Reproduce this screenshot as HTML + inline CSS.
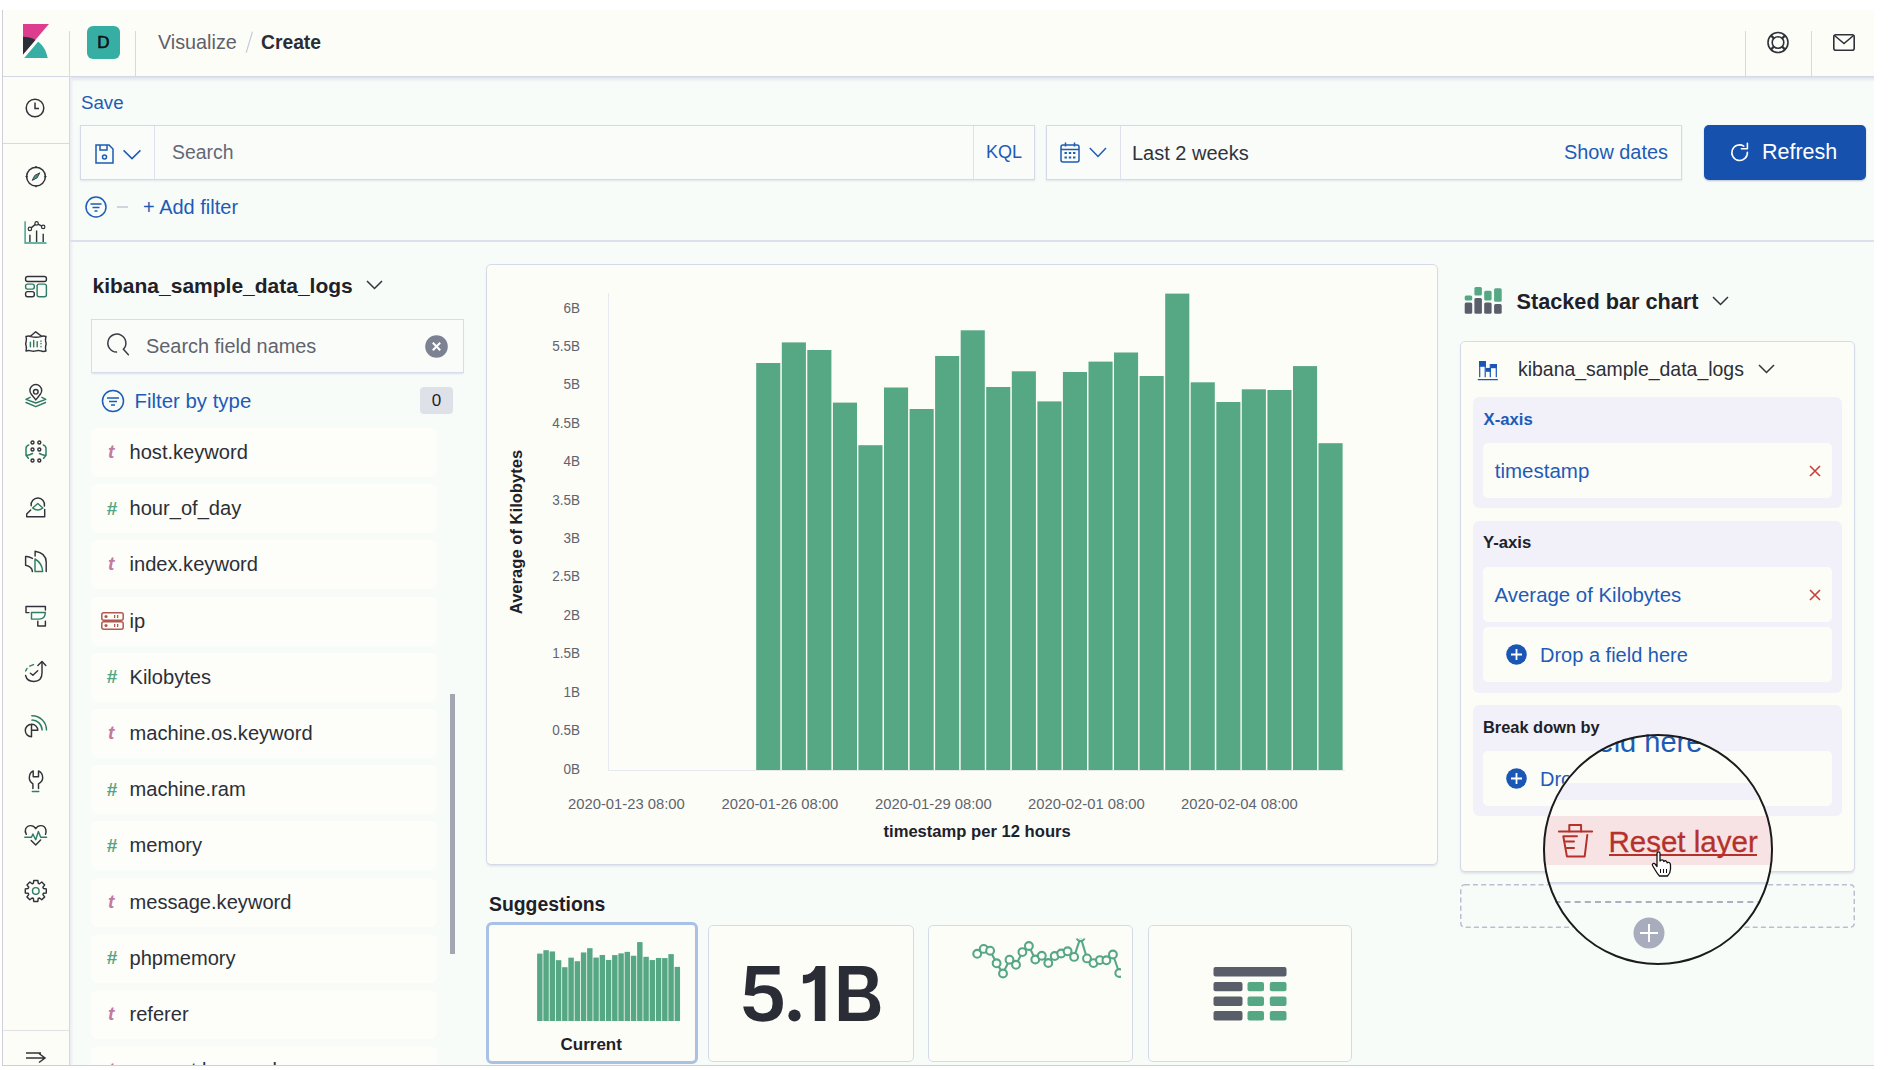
<!DOCTYPE html>
<html><head><meta charset="utf-8">
<style>
*{box-sizing:border-box;margin:0;padding:0}
html,body{width:1894px;height:1070px;overflow:hidden;background:#fff;font-family:"Liberation Sans",sans-serif;color:#30333b}
.a{position:absolute}
.t{position:absolute;white-space:nowrap;line-height:1}
#app{position:absolute;left:2px;top:10px;width:1872px;height:1056px;background:#f8fcf9;border-left:1px solid #cdd0da;border-bottom:1px solid #cdd0da;overflow:hidden}
.blue{color:#1d5bb6}
svg{position:absolute;overflow:visible}
.fi{left:91px;width:346px;height:49px;border-radius:6px;background:#fdfdf9}
.ft{left:108px;font-size:19px;font-weight:bold;font-style:italic;color:#c27aa0}
.fh{left:106.5px;font-size:19px;font-weight:bold;font-style:italic;color:#54a582}
.fn{left:129.5px;font-size:20.1px;color:#2c2f37}
.yl{left:480px;width:100px;text-align:right;font-size:14.7px;color:#5f636d;transform:scaleX(.92);transform-origin:100% 50%}
.xl{font-size:14.8px;color:#5f636d}
.sc{top:925px;height:137px;border:1px solid #d6dae8;border-radius:5px;background:#fdfdf8}
.grp{left:1473px;width:369px;border-radius:6px;background:#f2f1f9}
.itm{left:1483px;width:349px;height:55px;border-radius:5px;background:#fdfdf8}
.xx{position:absolute;left:1809px}
</style></head>
<body>
<div id="app"></div>
<div id="clip" style="position:absolute;left:0;top:0;width:1874px;height:1065px;overflow:hidden">
<!-- HEADER -->
<div class="a" style="left:3px;top:10px;width:1871px;height:66px;background:#fdfdf7"></div>
<div class="a" style="left:3px;top:76px;width:1871px;height:1px;background:#d4d7e6"></div>
<div class="a" style="left:70px;top:77px;width:1804px;height:5px;background:linear-gradient(#dfe1e8,rgba(244,244,250,0))"></div>
<!-- left nav -->
<div class="a" style="left:3px;top:77px;width:66px;height:988px;background:#fdfdf7"></div>
<div class="a" style="left:69px;top:31px;width:1px;height:1034px;background:#d5d8e8"></div>
<div class="a" style="left:70px;top:77px;width:4px;height:988px;background:linear-gradient(90deg,#ebebf3,rgba(248,252,249,0))"></div>
<div class="a" style="left:135px;top:31px;width:1px;height:45px;background:#d5d8e8"></div>
<div class="a" style="left:1745px;top:31px;width:1px;height:45px;background:#d5d8e8"></div>
<div class="a" style="left:1811px;top:31px;width:1px;height:45px;background:#d5d8e8"></div>
<div class="a" style="left:3px;top:143px;width:66px;height:1px;background:#d5d8e8"></div>
<div class="a" style="left:3px;top:1030px;width:66px;height:1px;background:#e3e0e6"></div>

<!-- logo -->
<svg style="left:23px;top:24px" width="26" height="34" viewBox="4 0 25 32" preserveAspectRatio="none">
<polygon fill="#de3c8e" points="4 0 4 28.789 28.935 .017"/>
<path fill="#2b2e36" d="M4,12 L4,28.789 L15.906,15.051 C12.453,13.107 8.389,12 4,12"/>
<path fill="#37afa5" d="M18.479,16.664 L6.268,30.754 L5.202,31.984 L27.722,31.984 C26.5,25.328 23.24,19.696 18.479,16.664"/>
</svg>
<!-- avatar -->
<div class="a" style="left:87px;top:26px;width:33px;height:33px;border-radius:6px;background:#37aea3"></div>
<div class="t" style="left:87px;top:34px;width:33px;text-align:center;font-size:17px;color:#111;-webkit-text-stroke:0.6px #111">D</div>
<div class="t" style="left:158px;top:33px;font-size:19.8px;color:#5d616b">Visualize</div>
<svg style="left:245px;top:31px" width="9" height="23" viewBox="0 0 9 23"><path d="M7.5 0.6L1.2 21.7" stroke="#c3c9dc" stroke-width="1.2"/></svg>
<div class="t" style="left:261px;top:33px;font-size:19.3px;font-weight:bold;color:#2a2d35">Create</div>
<!-- help -->
<svg style="left:1767px;top:31px" width="22" height="23" viewBox="0 0 22 23">
<g fill="none" stroke="#2f323a" stroke-width="1.6"><circle cx="11" cy="11.5" r="10"/><circle cx="11" cy="11.5" r="5.8"/>
<path d="M4 4.5L7 7.5M18 4.5L15 7.5M4 18.5L7 15.5M18 18.5L15 15.5" stroke-width="2.4"/></g></svg>
<svg style="left:1833px;top:34px" width="22" height="17" viewBox="0 0 22 17">
<g fill="none" stroke="#2f323a" stroke-width="1.6"><rect x="0.8" y="0.8" width="20.4" height="15.4" rx="2"/><path d="M1.5 1.5L11 9.5L20.5 1.5"/></g></svg>

<!-- QUERY BAR -->
<div class="t blue" style="left:81px;top:94px;font-size:18.7px">Save</div>
<div class="a" style="left:80px;top:125px;width:955px;height:55px;border:1px solid #d5d9e8;background:#fafcfa;box-shadow:0 1px 2px rgba(150,160,190,.25)"></div>
<div class="a" style="left:154px;top:126px;width:1px;height:53px;background:#dfe2ee"></div>
<div class="a" style="left:973px;top:126px;width:1px;height:53px;background:#dfe2ee"></div>
<div class="t" style="left:172px;top:143px;font-size:19.4px;color:#646873">Search</div>
<div class="t blue" style="left:986px;top:143px;font-size:18px">KQL</div>
<div class="a" style="left:1046px;top:125px;width:636px;height:55px;border:1px solid #d5d9e8;background:#fafcfa;box-shadow:0 1px 2px rgba(150,160,190,.25)"></div>
<div class="a" style="left:1120px;top:126px;width:1px;height:53px;background:#dfe2ee"></div>
<div class="t" style="left:1132px;top:143px;font-size:20px;color:#30333b">Last 2 weeks</div>
<div class="t blue" style="left:1564px;top:143px;font-size:19.9px">Show dates</div>
<div class="a" style="left:1704px;top:125px;width:162px;height:55px;border-radius:5px;background:#1651ae;box-shadow:0 1px 2px rgba(40,60,120,.3)"></div>
<div class="t" style="left:1762px;top:142px;font-size:21.5px;color:#fff">Refresh</div>
<div class="a" style="left:70px;top:240px;width:1804px;height:2px;background:#dcdfec"></div>

<!-- NAV ICONS -->
<svg style="left:25px;top:98px" width="20" height="20" viewBox="0 0 20 20"><g fill="none" stroke="#30333b" stroke-width="1.5"><circle cx="10" cy="10" r="8.8"/><path d="M10 4.5V10.5H14"/></g></svg>
<svg style="left:25px;top:166px" width="22" height="22" viewBox="0 0 22 22"><g fill="none" stroke="#30333b" stroke-width="1.5"><circle cx="11" cy="10.6" r="9.4"/><path d="M11 0v2.2M11 19v2.2M0.6 10.6h2.2M19.2 10.6h2.2" stroke-width="1.3"/></g><path d="M14.8 6.8L12.2 11.8L7.2 14.4L9.8 9.4Z" fill="#3b9a8c" stroke="#30333b" stroke-width="0.9" stroke-linejoin="round"/></svg>
<svg style="left:24px;top:220px" width="24" height="24" viewBox="0 0 24 24"><g fill="none" stroke-width="1.4"><path d="M1.1 1.3V23H22.5" stroke="#3b9a8c"/><path d="M5.9 22V14.7M12.6 22V10.6M19.2 22V13.7" stroke="#30333b"/><path d="M5.9 8.9L12.6 3.4L19.2 6.9" stroke="#30333b"/><g fill="#fdfdf7" stroke="#30333b" stroke-width="1.2"><circle cx="5.9" cy="8.9" r="1.7"/><circle cx="12.6" cy="3.4" r="1.7"/><circle cx="19.2" cy="6.9" r="1.7"/></g></g></svg>
<svg style="left:20px;top:272px" width="30" height="30" viewBox="0 0 30 30"><g fill="none" stroke-width="1.45" stroke-linecap="round" stroke-linejoin="round"><rect x="5.6" y="4.5" width="20.8" height="4.9" rx="2" stroke="#30333b"/><rect x="5.6" y="12.1" width="8.7" height="5" rx="2" stroke="#2f7d68"/><rect x="5.6" y="19.6" width="8.7" height="5.1" rx="2" stroke="#30333b"/><rect x="17.1" y="12.1" width="9.3" height="12.6" rx="2" stroke="#2f7d68"/></g></svg>
<svg style="left:20px;top:327px" width="30" height="30" viewBox="0 0 30 30"><g fill="none" stroke-width="1.45" stroke-linecap="round" stroke-linejoin="round"><path d="M10.7 9L15.7 4.8L21.3 9" stroke="#30333b"/><path d="M6 9.5Q9 8.6 11 9.6Q15.9 11 20.8 9.6Q23 8.6 26 9.5Q25.2 12.5 25.6 14Q26.6 16.6 25.6 19.3Q25.2 21 26 24Q23 24.9 20.8 23.9Q18.3 23 15.9 23.9Q13.4 24.8 11 23.9Q8.7 23 6 24Q6.8 21 6.2 19.3Q5.3 16.6 6.2 14Q6.8 12.5 6 9.5Z" stroke="#30333b"/><path d="M10.4 15.3V19.8M13.7 13.5V19.8M17.2 14.6V19.8M21 14V14.2M21 16.5V16.7M21 19.5V19.7" stroke="#2f7d68"/></g></svg>
<svg style="left:20px;top:382px" width="30" height="30" viewBox="0 0 30 30"><g fill="none" stroke-width="1.45" stroke-linecap="round" stroke-linejoin="round"><path d="M15.8 17.9L11.3 12.3A5.9 5.9 0 1 1 20.3 12.3Z" stroke="#30333b"/><circle cx="15.8" cy="9.8" r="2.3" stroke="#30333b"/><path d="M10.1 15.3L6 17.4L15.8 21L25.8 17.4L21.9 15.3M6 20.5L15.8 24.7L25.5 20.5" stroke="#2f7d68"/></g></svg>
<svg style="left:24px;top:441px" width="24" height="22" viewBox="0 0 24 22"><g fill="none" stroke="#30333b" stroke-width="1.4"><circle cx="8.5" cy="1.5" r="1.5"/><circle cx="15.3" cy="1.5" r="1.5"/><circle cx="8.5" cy="8.5" r="1.5"/><circle cx="15.3" cy="8.5" r="1.5"/><circle cx="8.5" cy="19.5" r="1.5"/><circle cx="15.3" cy="19.5" r="1.5"/></g><g fill="none" stroke="#2f7d68" stroke-width="1.5" stroke-linecap="round"><path d="M4.7 4Q2 5 2 7.5V14.2L4.4 17.3M2.2 14.5Q6 14 8.5 12.5"/><path d="M19.3 4Q22 5 22 7.5V14.2L19.6 17.3M21.8 14.5Q18 14 15.5 12.5"/></g></svg>
<svg style="left:20px;top:492px" width="30" height="30" viewBox="0 0 30 30"><g fill="none" stroke-width="1.45" stroke-linecap="round" stroke-linejoin="round"><path d="M11.2 13.7A6.7 6.7 0 1 1 24.4 14" stroke="#30333b"/><path d="M12.6 16L17.8 11.5L22.8 16Q17.8 20 12.6 16Z" stroke="#2f7d68"/><path d="M10.7 18L6.7 22.1V24.7H24.7V17.4" stroke="#30333b"/></g></svg>
<svg style="left:20px;top:547px" width="30" height="30" viewBox="0 0 30 30"><g fill="none" stroke-width="1.45" stroke-linecap="round" stroke-linejoin="round"><path d="M12.4 11.4Q9 9.6 6.5 9.5H5.6V18.3Q12 19.5 12.4 24.6" stroke="#30333b"/><path d="M15.1 9V4.3Q26 6 26.2 15V24.6" stroke="#30333b"/><path d="M15 12V24.5H22.7Q22 16 15 12Z" stroke="#2f7d68"/></g></svg>
<svg style="left:20px;top:602px" width="30" height="30" viewBox="0 0 30 30"><g fill="none" stroke-width="1.45" stroke-linecap="round" stroke-linejoin="round"><path d="M9 10.6H6V4.5H25.4V7.9" stroke="#30333b"/><path d="M11.5 10.5H25.4Q25 17.1 19 17.1H11.5Z" stroke="#2f7d68"/><path d="M17.8 19.1V24H25.4V19.1" stroke="#30333b"/></g></svg>
<svg style="left:20px;top:657px" width="30" height="30" viewBox="0 0 30 30"><g fill="none" stroke-width="1.45" stroke-linecap="round" stroke-linejoin="round"><path d="M22 5V16Q22 24.4 13.7 24.4Q7 24.4 5.6 18.5" stroke="#30333b"/><path d="M17.9 8.4L22 4.4L25.8 8.4" stroke="#30333b"/><path d="M5.7 13.9L7 11.5M9.7 9.1L13.5 7.6" stroke="#2f7d68"/><path d="M10.4 16.3L12.9 18.3L17.7 13.7" stroke="#30333b"/></g></svg>
<svg style="left:20px;top:712px" width="30" height="30" viewBox="0 0 30 30"><g fill="none" stroke-width="1.45" stroke-linecap="round" stroke-linejoin="round"><path d="M11.5 12.3A6.2 6.2 0 0 0 11.5 24.7ZM11.5 12.3A6 6 0 0 1 17.8 18.3H11.5" stroke="#30333b"/><path d="M11.8 8.1A10 10 0 0 1 22.1 17.9M11.8 3.8A14.3 14.3 0 0 1 26.5 17.9" stroke="#2f7d68"/></g></svg>
<svg style="left:20px;top:767px" width="30" height="30" viewBox="0 0 30 30"><g fill="none" stroke-width="1.45" stroke-linecap="round" stroke-linejoin="round"><path d="M13.2 3.9Q9.3 6 9.3 10.7Q9.3 14.5 12.9 16.8V21.6M18.5 3.9Q22.7 6 22.7 10.7Q22.7 14.5 18.5 16.8V21.6M13.2 3.9V9.8H18.5V3.9" stroke="#30333b"/><path d="M12.3 24.4H18.8" stroke="#2f7d68"/></g></svg>
<svg style="left:20px;top:822px" width="30" height="30" viewBox="0 0 30 30"><g fill="none" stroke-width="1.45" stroke-linecap="round" stroke-linejoin="round"><path d="M6.3 12.3Q4.6 9.5 5.6 7Q7 3.6 10.7 3.6Q14 3.6 15.7 6.7Q17.5 3.6 20.8 3.6Q24.8 3.6 25.8 7.5Q26.5 10.5 25.5 12.3" stroke="#30333b"/><path d="M4.8 15.3H11.5L12.9 12L15.7 17.7L18.4 9.5L20.7 15.3H26.6" stroke="#2f7d68"/><path d="M11.2 18.4L15.7 23.1L20.6 17.9" stroke="#30333b"/></g></svg>
<svg style="left:20px;top:877px" width="30" height="30" viewBox="0 0 30 30"><g fill="none" stroke-width="1.45" stroke-linecap="round" stroke-linejoin="round"><path d="M23.43 11.49L26.30 11.86L26.30 15.94L23.43 16.31L22.90 17.59L24.67 19.88L21.78 22.77L19.49 21.00L18.21 21.53L17.84 24.40L13.76 24.40L13.39 21.53L12.11 21.00L9.82 22.77L6.93 19.88L8.70 17.59L8.17 16.31L5.30 15.94L5.30 11.86L8.17 11.49L8.70 10.21L6.93 7.92L9.82 5.03L12.11 6.80L13.39 6.27L13.76 3.40L17.84 3.40L18.21 6.27L19.49 6.80L21.78 5.03L24.67 7.92L22.90 10.21Z" stroke="#30333b"/><circle cx="15.8" cy="13.9" r="3.3" stroke="#2f7d68"/></g></svg>
<svg style="left:25px;top:1050px" width="22" height="14" viewBox="0 0 22 14"><g fill="none" stroke="#30333b" stroke-width="1.5"><path d="M1 3H16M1 8H20M14 3.5L20 8L14 12.5"/></g></svg>

<!-- filter row -->
<svg style="left:85px;top:196px" width="22" height="22" viewBox="0 0 22 22"><g fill="none" stroke="#1d5bb6" stroke-width="1.5"><circle cx="11" cy="11" r="10"/><path d="M5.5 8H16.5M7.5 11.5H14.5M9.5 15H12.5"/></g></svg>
<div class="a" style="left:117px;top:206px;width:11px;height:1.5px;background:#d0d4df"></div>
<div class="t blue" style="left:143px;top:197px;font-size:20px">+ Add filter</div>

<!-- icons in query bar -->
<svg style="left:95px;top:144px" width="50" height="20" viewBox="0 0 50 20"><g fill="none" stroke="#1d5bb6" stroke-width="1.5"><path d="M1 1H14L18 5V19H1Z"/><path d="M5 1V6H12V1"/><circle cx="9.5" cy="13" r="2"/><path d="M28.6 6.4L37 14.6L45.4 6.4"/></g></svg>
<svg style="left:1060px;top:142px" width="50" height="22" viewBox="0 0 50 22"><g fill="none" stroke="#1d5bb6" stroke-width="1.5"><rect x="1" y="3" width="18" height="17" rx="2"/><path d="M1 7.5H19M5.5 0.5V4.5M14.5 0.5V4.5"/><path d="M29.8 6L38 14.4L46 6"/></g><g fill="#1d5bb6"><rect x="4.5" y="10" width="2.4" height="2"/><rect x="8.8" y="10" width="2.4" height="2"/><rect x="13" y="10" width="2.4" height="2"/><rect x="4.5" y="14.5" width="2.4" height="2"/><rect x="8.8" y="14.5" width="2.4" height="2"/><rect x="13" y="14.5" width="2.4" height="2"/></g></svg>
<svg style="left:1731px;top:142px" width="20" height="20" viewBox="0 0 20 20"><g fill="none" stroke="#fff" stroke-width="1.6" stroke-linecap="round" stroke-linejoin="round"><path d="M12.8 4.1A7.8 7.8 0 1 0 16.4 10.2"/><path d="M16.4 1.2V6.7H10.4"/></g></svg>

<!-- LEFT PANEL -->
<div class="t" style="left:92.5px;top:275px;font-size:21px;font-weight:bold;color:#1f2128">kibana_sample_data_logs</div>
<svg style="left:366px;top:280px" width="17" height="10" viewBox="0 0 17 10"><path d="M1 1L8.5 8.5L16 1" fill="none" stroke="#30333b" stroke-width="1.5"/></svg>
<div class="a" style="left:91px;top:319px;width:373px;height:54px;border:1px solid #d7dbea;background:#fafcfa;box-shadow:0 2px 2px -1px rgba(150,160,190,.3)"></div>
<svg style="left:106px;top:333px" width="24" height="24" viewBox="0 0 24 24"><path d="M10.5 19.1A9 9 0 1 1 17.4 16.3L22.4 21.7" fill="none" stroke="#3a3d45" stroke-width="1.5" stroke-linecap="round"/></svg>
<div class="t" style="left:146px;top:336.5px;font-size:19.9px;color:#5f636d">Search field names</div>
<svg style="left:425px;top:335px" width="23" height="23" viewBox="0 0 23 23"><circle cx="11.5" cy="11.5" r="11.3" fill="#7d8292"/><path d="M7.8 7.8L15.2 15.2M15.2 7.8L7.8 15.2" stroke="#fff" stroke-width="2"/></svg>
<svg style="left:101px;top:389px" width="24" height="24" viewBox="0 0 24 24"><g fill="none" stroke="#1d5bb6" stroke-width="1.5"><circle cx="12" cy="12" r="10.5"/><path d="M6 9H18M8 12.5H16M10 16H14"/></g></svg>
<div class="t blue" style="left:134.5px;top:391px;font-size:20.4px">Filter by type</div>
<div class="a" style="left:420px;top:387px;width:33px;height:27px;border-radius:4px;background:#dfe1e8"></div>
<div class="t" style="left:420px;top:392px;width:33px;text-align:center;font-size:17px;color:#1f2128">0</div>
<div class="a fi" style="top:428.0px"></div>
<div class="t ft" style="top:442.0px">t</div>
<div class="t fn" style="top:442.0px">host.keyword</div>
<div class="a fi" style="top:484.2px"></div>
<div class="t fh" style="top:498.7px">#</div>
<div class="t fn" style="top:498.2px">hour_of_day</div>
<div class="a fi" style="top:540.4px"></div>
<div class="t ft" style="top:554.4px">t</div>
<div class="t fn" style="top:554.4px">index.keyword</div>
<div class="a fi" style="top:596.6px"></div>
<svg style="left:101px;top:611.6px" width="23" height="18" viewBox="0 0 23 18"><g fill="none" stroke="#b2594f" stroke-width="1.5"><rect x="0.8" y="0.8" width="21.4" height="7.4" rx="2"/><rect x="0.8" y="9.8" width="21.4" height="7.4" rx="2"/></g><g fill="#b2594f"><circle cx="5" cy="4.5" r="1.6"/><circle cx="5" cy="13.5" r="1.6"/><rect x="13" y="3" width="1.3" height="3"/><rect x="16" y="3" width="1.3" height="3"/><rect x="13" y="12" width="1.3" height="3"/><rect x="16" y="12" width="1.3" height="3"/></g></svg>
<div class="t fn" style="top:610.6px">ip</div>
<div class="a fi" style="top:652.8px"></div>
<div class="t fh" style="top:667.3px">#</div>
<div class="t fn" style="top:666.8px">Kilobytes</div>
<div class="a fi" style="top:709.0px"></div>
<div class="t ft" style="top:723.0px">t</div>
<div class="t fn" style="top:723.0px">machine.os.keyword</div>
<div class="a fi" style="top:765.2px"></div>
<div class="t fh" style="top:779.7px">#</div>
<div class="t fn" style="top:779.2px">machine.ram</div>
<div class="a fi" style="top:821.4px"></div>
<div class="t fh" style="top:835.9px">#</div>
<div class="t fn" style="top:835.4px">memory</div>
<div class="a fi" style="top:877.6px"></div>
<div class="t ft" style="top:891.6px">t</div>
<div class="t fn" style="top:891.6px">message.keyword</div>
<div class="a fi" style="top:933.8px"></div>
<div class="t fh" style="top:948.3px">#</div>
<div class="t fn" style="top:947.8px">phpmemory</div>
<div class="a fi" style="top:990.0px"></div>
<div class="t ft" style="top:1004.0px">t</div>
<div class="t fn" style="top:1004.0px">referer</div>
<div class="a fi" style="top:1046.2px"></div>
<div class="t ft" style="top:1060.2px">t</div>
<div class="t fn" style="top:1060.2px">request.keyword</div>
<div class="a" style="left:450px;top:694px;width:5px;height:260px;background:#a3a7b1"></div>

<!-- CHART PANEL -->
<div class="a" style="left:486px;top:264px;width:952px;height:601px;border:1px solid #d6dae8;border-radius:5px;background:#fdfdf8;box-shadow:0 2px 3px -1px rgba(150,160,190,.35)"></div>
<div class="a" style="left:608px;top:293px;width:1px;height:477px;background:#e6e9ef"></div>
<div class="a" style="left:608px;top:770px;width:737px;height:1px;background:#e6e9ef"></div>
<div class="t yl" style="top:300.5px">6B</div>
<div class="t yl" style="top:338.9px">5.5B</div>
<div class="t yl" style="top:377.3px">5B</div>
<div class="t yl" style="top:415.8px">4.5B</div>
<div class="t yl" style="top:454.2px">4B</div>
<div class="t yl" style="top:492.6px">3.5B</div>
<div class="t yl" style="top:531.0px">3B</div>
<div class="t yl" style="top:569.4px">2.5B</div>
<div class="t yl" style="top:607.9px">2B</div>
<div class="t yl" style="top:646.3px">1.5B</div>
<div class="t yl" style="top:684.7px">1B</div>
<div class="t yl" style="top:723.1px">0.5B</div>
<div class="t yl" style="top:761.5px">0B</div>
<svg style="left:0;top:0" width="1894" height="1070"><g fill="#56a784">
<rect x="756.2" y="363.0" width="24.1" height="407.0"/>
<rect x="781.8" y="342.4" width="24.1" height="427.6"/>
<rect x="807.3" y="350.0" width="24.1" height="420.0"/>
<rect x="832.9" y="402.6" width="24.1" height="367.4"/>
<rect x="858.4" y="445.2" width="24.1" height="324.8"/>
<rect x="884.0" y="387.5" width="24.1" height="382.5"/>
<rect x="909.6" y="409.0" width="24.1" height="361.0"/>
<rect x="935.1" y="356.0" width="24.1" height="414.0"/>
<rect x="960.7" y="330.3" width="24.1" height="439.7"/>
<rect x="986.2" y="387.0" width="24.1" height="383.0"/>
<rect x="1011.8" y="371.3" width="24.1" height="398.7"/>
<rect x="1037.4" y="401.4" width="24.1" height="368.6"/>
<rect x="1062.9" y="372.0" width="24.1" height="398.0"/>
<rect x="1088.5" y="361.6" width="24.1" height="408.4"/>
<rect x="1114.0" y="352.5" width="24.1" height="417.5"/>
<rect x="1139.6" y="376.0" width="24.1" height="394.0"/>
<rect x="1165.2" y="293.6" width="24.1" height="476.4"/>
<rect x="1190.7" y="382.3" width="24.1" height="387.7"/>
<rect x="1216.3" y="402.0" width="24.1" height="368.0"/>
<rect x="1241.8" y="389.3" width="24.1" height="380.7"/>
<rect x="1267.4" y="390.0" width="24.1" height="380.0"/>
<rect x="1293.0" y="366.1" width="24.1" height="403.9"/>
<rect x="1318.5" y="443.2" width="24.1" height="326.8"/>
</g></svg>
<div class="t xl" style="left:568px;top:797px">2020-01-23 08:00</div>
<div class="t xl" style="left:721.5px;top:797px">2020-01-26 08:00</div>
<div class="t xl" style="left:875px;top:797px">2020-01-29 08:00</div>
<div class="t xl" style="left:1028px;top:797px">2020-02-01 08:00</div>
<div class="t xl" style="left:1181px;top:797px">2020-02-04 08:00</div>
<div class="t" style="left:883.5px;top:824px;font-size:16.6px;font-weight:bold;color:#1f2128">timestamp per 12 hours</div>
<div class="t" style="left:517px;top:532px;font-size:16.6px;font-weight:bold;color:#1f2128;transform:translate(-50%,-50%) rotate(-90deg)">Average of Kilobytes</div>

<!-- SUGGESTIONS -->
<div class="t" style="left:489px;top:894.5px;font-size:19.4px;font-weight:bold;color:#1f2128">Suggestions</div>
<div class="a" style="left:486px;top:921.5px;width:212px;height:142.5px;border:3px solid #a9c0e7;border-radius:6px;background:#fdfdf8"></div>
<svg style="left:0;top:0" width="1894" height="1070"><g fill="#56a784">
<rect x="537.10" y="953.60" width="5.45" height="67.40"/>
<rect x="543.35" y="950.19" width="5.45" height="70.81"/>
<rect x="549.60" y="951.45" width="5.45" height="69.55"/>
<rect x="555.85" y="960.16" width="5.45" height="60.84"/>
<rect x="562.10" y="967.21" width="5.45" height="53.79"/>
<rect x="568.35" y="957.66" width="5.45" height="63.34"/>
<rect x="574.60" y="961.22" width="5.45" height="59.78"/>
<rect x="580.85" y="952.44" width="5.45" height="68.56"/>
<rect x="587.10" y="948.19" width="5.45" height="72.81"/>
<rect x="593.35" y="957.58" width="5.45" height="63.42"/>
<rect x="599.60" y="954.98" width="5.45" height="66.02"/>
<rect x="605.85" y="959.96" width="5.45" height="61.04"/>
<rect x="612.10" y="955.09" width="5.45" height="65.91"/>
<rect x="618.35" y="953.37" width="5.45" height="67.63"/>
<rect x="624.60" y="951.86" width="5.45" height="69.14"/>
<rect x="630.85" y="955.75" width="5.45" height="65.25"/>
<rect x="637.10" y="942.11" width="5.45" height="78.89"/>
<rect x="643.35" y="956.80" width="5.45" height="64.20"/>
<rect x="649.60" y="960.06" width="5.45" height="60.94"/>
<rect x="655.85" y="957.96" width="5.45" height="63.04"/>
<rect x="662.10" y="958.07" width="5.45" height="62.93"/>
<rect x="668.35" y="954.11" width="5.45" height="66.89"/>
<rect x="674.60" y="966.88" width="5.45" height="54.12"/>
</g></svg>
<div class="t" style="left:560.5px;top:1036px;font-size:17px;font-weight:bold;color:#1f2128">Current</div>
<div class="a sc" style="left:708px;top:925px;width:206px"></div>
<svg style="left:0;top:0" width="1894" height="1070"><g fill="#2a2d35" fill-rule="evenodd">
<path d="M747.3 966L779.6 966L779.6 974.6L755.9 974.6L754.4 988.6Q758 985.3 764 985.3Q782.9 985.3 782.9 1003.3Q782.9 1021.7 762.8 1021.7Q745.5 1021.7 743.2 1006.6L753.4 1006.6Q755 1013.5 762.8 1013.5Q772.6 1013.5 772.6 1003.3Q772.6 993.1 763 993.1Q756.5 993.1 753.8 995.9L744.8 995.1Z"/>
<circle cx="794.5" cy="1015.5" r="6.1"/>
<path d="M815.8 966L825.4 966L825.4 1021L814.8 1021L814.8 979.5Q810 983.6 802.9 983.6L802.9 975Q812.5 975 815.8 966Z"/>
<path d="M838.9 966H862Q877.8 966 877.8 980.5Q877.8 989.5 869.2 992.8Q880.3 996.5 880.3 1007.5Q880.3 1021 863 1021H838.9ZM848.7 974.6H860Q867.6 974.6 867.6 982Q867.6 989.4 860 989.4H848.7ZM848.7 997.1H861Q870 997.1 870 1004.9Q870 1012.7 861 1012.7H848.7Z"/>
</g></svg>
<div class="a sc" style="left:928px;top:925px;width:205px"></div>
<svg style="left:0;top:0" width="1894" height="1070"><defs><clipPath id="lc"><rect x="960" y="938.5" width="161" height="60"/></clipPath></defs><g clip-path="url(#lc)" fill="#fdfdf8" stroke="#56a784" stroke-width="2.1"><polyline points="977.2,953.8 983.7,948.9 990.1,950.7 996.6,963.3 1003.0,973.5 1009.5,959.7 1016.0,964.8 1022.4,952.1 1028.9,946.0 1035.3,959.5 1041.8,955.8 1048.3,963.0 1054.7,956.0 1061.2,953.5 1067.6,951.3 1074.1,956.9 1080.6,937.2 1087.0,958.4 1093.5,963.1 1099.9,960.1 1106.4,960.3 1112.9,954.5 1119.3,973.0" fill="none"/><circle cx="977.2" cy="953.8" r="3.9"/><circle cx="983.7" cy="948.9" r="3.9"/><circle cx="990.1" cy="950.7" r="3.9"/><circle cx="996.6" cy="963.3" r="3.9"/><circle cx="1003.0" cy="973.5" r="3.9"/><circle cx="1009.5" cy="959.7" r="3.9"/><circle cx="1016.0" cy="964.8" r="3.9"/><circle cx="1022.4" cy="952.1" r="3.9"/><circle cx="1028.9" cy="946.0" r="3.9"/><circle cx="1035.3" cy="959.5" r="3.9"/><circle cx="1041.8" cy="955.8" r="3.9"/><circle cx="1048.3" cy="963.0" r="3.9"/><circle cx="1054.7" cy="956.0" r="3.9"/><circle cx="1061.2" cy="953.5" r="3.9"/><circle cx="1067.6" cy="951.3" r="3.9"/><circle cx="1074.1" cy="956.9" r="3.9"/><circle cx="1080.6" cy="937.2" r="3.9"/><circle cx="1087.0" cy="958.4" r="3.9"/><circle cx="1093.5" cy="963.1" r="3.9"/><circle cx="1099.9" cy="960.1" r="3.9"/><circle cx="1106.4" cy="960.3" r="3.9"/><circle cx="1112.9" cy="954.5" r="3.9"/><circle cx="1119.3" cy="973.0" r="3.9"/></g></svg>
<div class="a sc" style="left:1148px;top:925px;width:204px"></div>
<svg style="left:1213px;top:967px" width="74" height="54" viewBox="0 0 74 54"><g fill="#5a5e6a"><rect x="0.5" y="0" width="73" height="9.5" rx="2"/><rect x="0.5" y="15" width="29" height="9.3" rx="2"/><rect x="0.5" y="29.4" width="29" height="9.6" rx="2"/><rect x="0.5" y="44" width="29" height="9.6" rx="2"/></g><g fill="#56a784"><rect x="34.5" y="15" width="16.5" height="9.3" rx="2"/><rect x="56.8" y="15" width="16.7" height="9.3" rx="2"/><rect x="34.5" y="29.4" width="16.5" height="9.6" rx="2"/><rect x="56.8" y="29.4" width="16.7" height="9.6" rx="2"/><rect x="34.5" y="44" width="16.5" height="9.6" rx="2"/><rect x="56.8" y="44" width="16.7" height="9.6" rx="2"/></g></svg>

<!-- RIGHT PANEL -->
<svg style="left:1464px;top:287px" width="38" height="28" viewBox="0 0 38 28"><g fill="#56a784"><rect x="0.7" y="8.5" width="7.5" height="4.9" rx="1.5"/><rect x="10.4" y="0.1" width="7.5" height="8.4" rx="1.5"/><rect x="20.2" y="3.7" width="7.4" height="9.7" rx="1.5"/><rect x="30.1" y="1.2" width="7.6" height="13.5" rx="1.5"/></g><g fill="#5a5e6a"><rect x="0.7" y="15.6" width="7.5" height="11.2" rx="1.5"/><rect x="10.4" y="11" width="7.5" height="15.8" rx="1.5"/><rect x="20.2" y="15.6" width="7.4" height="11.2" rx="1.5"/><rect x="30.1" y="17.1" width="7.6" height="9.7" rx="1.5"/></g></svg>
<div class="t" style="left:1516.5px;top:290.5px;font-size:21.7px;font-weight:bold;color:#1f2128">Stacked bar chart</div>
<svg style="left:1712px;top:296px" width="17" height="10" viewBox="0 0 17 10"><path d="M1 1L8.5 8.5L16 1" fill="none" stroke="#30333b" stroke-width="1.5"/></svg>
<div class="a" style="left:1460px;top:341px;width:395px;height:531px;border:1px solid #d6dae8;border-radius:5px;background:#fdfdf8;box-shadow:0 2px 3px -1px rgba(150,160,190,.4)"></div>
<svg style="left:1477px;top:360px" width="22" height="21" viewBox="0 0 22 21"><g fill="#1a56b4"><rect x="2.1" y="1" width="6.7" height="5.8"/><rect x="2.1" y="1" width="1.2" height="16.2"/><rect x="7.6" y="1" width="1.2" height="16.2"/><rect x="8.8" y="7.9" width="5.1" height="3.9"/><rect x="12.7" y="4" width="1.2" height="13.2"/><rect x="13.9" y="4" width="6" height="4.2"/><rect x="18.7" y="4" width="1.2" height="13.2"/><rect x="0.7" y="18.9" width="20.3" height="1.4" rx="0.6"/></g></svg>
<div class="t" style="left:1518px;top:359.5px;font-size:19.45px;color:#2c2f37">kibana_sample_data_logs</div>
<svg style="left:1758px;top:364px" width="17" height="10" viewBox="0 0 17 10"><path d="M1 1L8.5 8.5L16 1" fill="none" stroke="#30333b" stroke-width="1.5"/></svg>

<div class="a grp" style="top:397px;height:111px"></div>
<div class="t" style="left:1483.5px;top:411.5px;font-size:16.7px;font-weight:bold;color:#1d5bb6">X-axis</div>
<div class="a itm" style="top:443px"></div>
<div class="t blue" style="left:1494.8px;top:461px;font-size:20.5px">timestamp</div>
<svg class="xx" style="top:465px" width="12" height="12" viewBox="0 0 12 12"><path d="M1 1L11 11M11 1L1 11" stroke="#c4423a" stroke-width="1.6"/></svg>

<div class="a grp" style="top:520.5px;height:172px"></div>
<div class="t" style="left:1483px;top:535px;font-size:16.7px;font-weight:bold;color:#1f2128">Y-axis</div>
<div class="a itm" style="top:567px"></div>
<div class="t blue" style="left:1494.6px;top:585px;font-size:20.4px">Average of Kilobytes</div>
<svg class="xx" style="top:589px" width="12" height="12" viewBox="0 0 12 12"><path d="M1 1L11 11M11 1L1 11" stroke="#c4423a" stroke-width="1.6"/></svg>
<div class="a itm" style="top:627px"></div>
<svg style="left:1506px;top:644px" width="21" height="21" viewBox="0 0 21 21"><circle cx="10.5" cy="10.5" r="10.3" fill="#1a56b4"/><path d="M10.5 5V16M5 10.5H16" stroke="#fff" stroke-width="1.8"/></svg>
<div class="t blue" style="left:1540px;top:645px;font-size:20px">Drop a field here</div>

<div class="a grp" style="top:705px;height:111px"></div>
<div class="t" style="left:1483px;top:719px;font-size:16.4px;font-weight:bold;color:#1f2128">Break down by</div>
<div class="a itm" style="top:751px"></div>
<svg style="left:1506px;top:768px" width="21" height="21" viewBox="0 0 21 21"><circle cx="10.5" cy="10.5" r="10.3" fill="#1a56b4"/><path d="M10.5 5V16M5 10.5H16" stroke="#fff" stroke-width="1.8"/></svg>
<div class="t blue" style="left:1540px;top:769px;font-size:20px">Drop a field here</div>
<svg style="left:1460px;top:884px" width="395" height="44" viewBox="0 0 395 44"><rect x="0.75" y="0.75" width="393.5" height="42.5" rx="4" fill="none" stroke="#b9bfce" stroke-width="1.5" stroke-dasharray="5 3.2"/></svg>

<!-- MAGNIFIER -->
<div class="a" style="left:1542.5px;top:734.2px;width:230.6px;height:230.6px;border-radius:50%;overflow:hidden;background:#fdfdf8"><div class="a" style="left:1px;top:1.3px;width:230px;height:230px">
 <div class="a" style="left:-10px;top:0;width:260px;height:48px;background:#fdfdf8"></div>
 <div class="t" style="left:54px;top:-7px;font-size:29px;color:#1d5bb6">eld here</div>
 <div class="a" style="left:-10px;top:48px;width:260px;height:17px;background:#f2f1f9"></div>
 <div class="a" style="left:-10px;top:65px;width:260px;height:6px;background:#fdfdf8"></div>
 
 <div class="a" style="left:-10px;top:81px;width:260px;height:49px;background:#f7e3e3"></div>
 <svg style="left:0;top:0" width="230" height="230" viewBox="0 0 230 230"><g fill="none" stroke="#b5312b" stroke-width="2" stroke-linecap="round" stroke-linejoin="round"><path d="M14.9 96.5L48.1 96.5"/><path d="M25.3 96.5V89.9H37.1V96.5"/><path d="M43.3 100.0L40.7 121.4H22.9L19.3 101.2H33.0"/><path d="M21.7 106.5H30.0M22.7 113.1H30.0"/></g></svg>
 <div class="t" style="left:65px;top:91.6px;font-size:29.5px;color:#b5312b;-webkit-text-stroke:0.3px #b5312b">Reset layer</div>
 <div class="a" style="left:65px;top:118.5px;width:148px;height:2px;background:#b5312b"></div>
 <div class="a" style="left:-10px;top:130px;width:260px;height:17px;background:#fdfdf8"></div>
 <div class="a" style="left:-10px;top:147px;width:260px;height:3px;background:linear-gradient(#cfd3e3,#eef0f5)"></div>
 <div class="a" style="left:-10px;top:150px;width:260px;height:80px;background:#f8fcf9"></div>
 <div class="a" style="left:-10px;top:166px;width:260px;height:0;border-top:2.5px dashed #a9b0c2"></div>
 <svg style="left:89px;top:182px" width="32" height="32" viewBox="0 0 32 32"><circle cx="16" cy="16" r="15.5" fill="#a7adbd"/><path d="M16 7V25M7 16H25" stroke="#fff" stroke-width="2"/></svg>
 <svg style="left:107px;top:116px" width="22" height="26" viewBox="0 0 22 26"><path d="M6 2.5Q6 0.8 7.5 0.8Q9 0.8 9 2.5V10Q9.5 8.8 11 8.8Q12.5 8.8 12.8 10.5Q13.5 9.5 14.8 9.8Q16 10.2 16.2 11.8Q17 11 18.2 11.5Q19.5 12.2 19.5 14V18Q19.5 22 16.5 25H8.5Q6.5 23 4.5 19.5L1.5 14.5Q1 13 2.2 12.5Q3.5 12 4.5 13.5L6 15.5Z" fill="#fff" stroke="#111" stroke-width="1.3" stroke-linejoin="round"/><path d="M9.5 18V22M12.5 18V22M15.5 18V22" stroke="#111" stroke-width="1"/></svg>
</div></div>
<div class="a" style="left:1542.5px;top:734.2px;width:230.6px;height:230.6px;border-radius:50%;border:2.9px solid #1b1b1d"></div>
</div>
</body></html>
